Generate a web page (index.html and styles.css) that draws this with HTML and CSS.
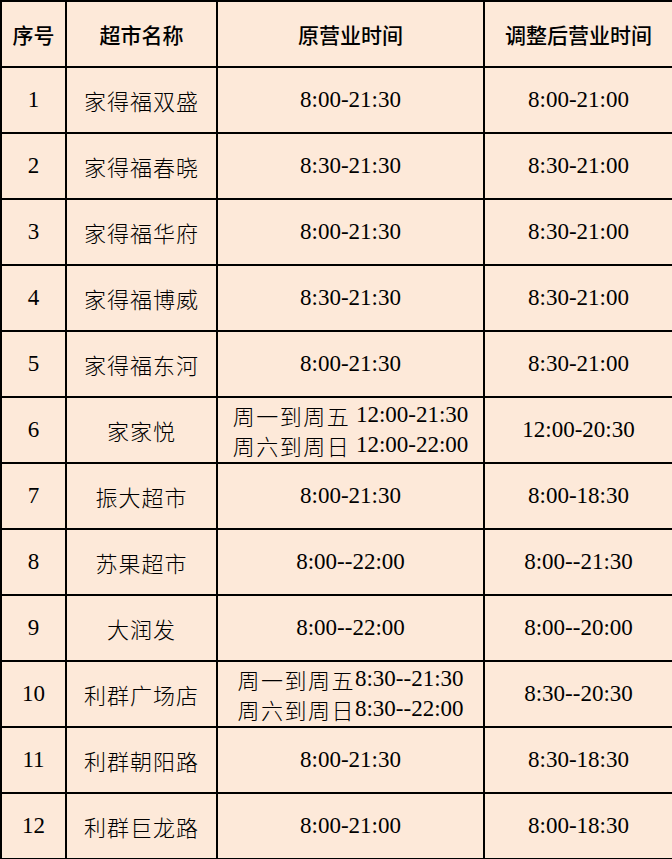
FILE: index.html
```html
<!DOCTYPE html>
<html lang="zh">
<head>
<meta charset="utf-8">
<link rel="stylesheet" href="styles.css">
</head>
<body>
<table class="hours">
  <colgroup>
    <col class="c-no"><col class="c-name"><col class="c-old"><col class="c-new">
  </colgroup>
  <thead>
    <tr><th>序号</th><th>超市名称</th><th>原营业时间</th><th>调整后营业时间</th></tr>
  </thead>
  <tbody>
    <tr><td>1</td><td><span class="zh">家得福双盛</span></td><td>8:00-21:30</td><td>8:00-21:00</td></tr>
    <tr><td>2</td><td><span class="zh">家得福春晓</span></td><td>8:30-21:30</td><td>8:30-21:00</td></tr>
    <tr><td>3</td><td><span class="zh">家得福华府</span></td><td>8:00-21:30</td><td>8:30-21:00</td></tr>
    <tr><td>4</td><td><span class="zh">家得福博威</span></td><td>8:30-21:30</td><td>8:30-21:00</td></tr>
    <tr><td>5</td><td><span class="zh">家得福东河</span></td><td>8:00-21:30</td><td>8:30-21:00</td></tr>
    <tr><td>6</td><td><span class="zh">家家悦</span></td><td class="two"><div class="ln"><span class="zh">周一到周五</span> 12:00-21:30</div><div class="ln"><span class="zh">周六到周日</span> 12:00-22:00</div></td><td>12:00-20:30</td></tr>
    <tr><td>7</td><td><span class="zh">振大超市</span></td><td>8:00-21:30</td><td>8:00-18:30</td></tr>
    <tr><td>8</td><td><span class="zh">苏果超市</span></td><td>8:00--22:00</td><td>8:00--21:30</td></tr>
    <tr><td>9</td><td><span class="zh">大润发</span></td><td>8:00--22:00</td><td>8:00--20:00</td></tr>
    <tr><td>10</td><td><span class="zh">利群广场店</span></td><td class="two"><div class="ln"><span class="zh">周一到周五</span>8:30--21:30</div><div class="ln"><span class="zh">周六到周日</span>8:30--22:00</div></td><td>8:30--20:30</td></tr>
    <tr><td>11</td><td><span class="zh">利群朝阳路</span></td><td>8:00-21:30</td><td>8:30-18:30</td></tr>
    <tr><td>12</td><td><span class="zh">利群巨龙路</span></td><td>8:00-21:00</td><td>8:00-18:30</td></tr>
  </tbody>
</table>
</body>
</html>
```

FILE: styles.css
```css
html, body {
  margin: 0;
  padding: 0;
  background: #fde9d9;
}

.hours {
  width: 672px;
  table-layout: fixed;
  border-collapse: collapse;
  background: #fde9d9;
  color: #000;
  font-family: "Liberation Serif", "Noto Sans CJK SC", serif;
  font-size: 23px;
}

.c-no { width: 65px; }
.c-name { width: 151px; }
.c-old { width: 267px; }
.c-new { width: 189px; }

.hours tr {
  height: 66px;
}

.hours th,
.hours td {
  border: 2px solid #000;
  height: 64px;
  padding: 0;
  text-align: center;
  vertical-align: middle;
  line-height: 30px;
}

.hours th {
  font-family: "Noto Sans CJK SC", sans-serif;
  font-weight: 500;
  font-size: 21px;
}

.zh {
  font-family: "Noto Sans CJK SC", sans-serif;
  font-weight: 300;
  font-size: 22px;
  letter-spacing: 1px;
  vertical-align: top;
  line-height: 30px;
}

.ln {
  height: 30px;
  line-height: 30px;
  overflow: visible;
  white-space: nowrap;
}

.two .zh {
  letter-spacing: 1.5px;
}
```
